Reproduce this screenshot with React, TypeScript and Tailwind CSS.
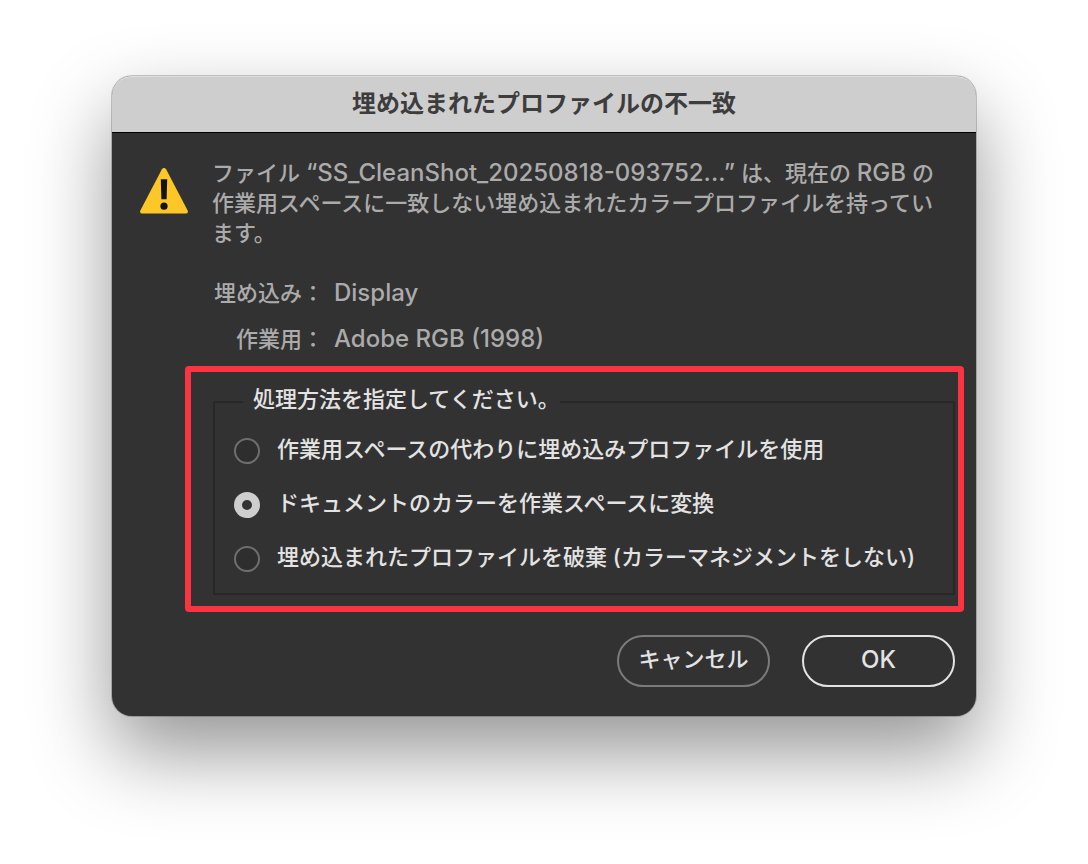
import { useState } from 'react';
import clsx from 'clsx';

type Method = {
  id: string;
  label: string;
};

const METHODS: Method[] = [
  { id: 'embedded', label: '作業用スペースの代わりに埋め込みプロファイルを使用' },
  { id: 'convert', label: 'ドキュメントのカラーを作業スペースに変換' },
  { id: 'discard', label: '埋め込まれたプロファイルを破棄 (カラーマネジメントをしない)' },
];

const PROFILES = [
  { label: '埋め込み：', value: 'Display' },
  { label: '作業用：', value: 'Adobe RGB (1998)' },
];

function WarningIcon() {
  return (
    <svg viewBox="0 0 48 46" className="mt-[10px] h-[46px] w-12 shrink-0" aria-hidden="true">
      <path
        d="M21.9 1.2 Q24 -1.4 26.1 1.2 L47.5 42.3 Q48.9 45.5 45.6 45.6 H2.4 Q-0.9 45.5 0.5 42.3 Z"
        fill="#ffc627"
      />
      <path d="M20.8 11.2 H27.2 L26.6 31.2 H21.4 Z" fill="#141414" />
      <circle cx="24" cy="38.2" r="3.6" fill="#141414" />
    </svg>
  );
}

type ButtonProps = {
  label: string;
  primary?: boolean;
};

function DialogButton({ label, primary }: ButtonProps) {
  return (
    <button
      type="button"
      className={clsx(
        'h-[52px] w-[153px] rounded-full border-2 font-medium text-[#e3e3e3]',
        primary ? 'border-[#e3e3e3] pb-[2px] text-2xl' : 'border-[#7b7b7b] pb-1',
      )}
    >
      {label}
    </button>
  );
}

export default function App() {
  const [method, setMethod] = useState('convert');

  return (
    <main className="min-h-screen bg-white px-28 pt-19 pb-37 font-[Inter,'Noto_Sans_CJK_JP',sans-serif] text-[22px] leading-[30px] font-medium text-[#ababab]">
      <div
        role="dialog"
        aria-labelledby="dialog-title"
        className="rounded-[20px] bg-[#323232] shadow-[0_0_0_1px_rgba(0,0,0,0.2),0_36px_80px_rgba(0,0,0,0.42)]"
      >
        <header className="rounded-t-[20px] border-b border-black bg-[#cecece] py-[13px] inset-shadow-[0_1px_0_#dedede]">
          <h1 id="dialog-title" className="text-center text-2xl leading-[30px] font-bold text-[#3d3d3d]">
            埋め込まれたプロファイルの不一致
          </h1>
        </header>

        <div className="flex gap-6 pt-[25px] pr-5 pl-7">
          <WarningIcon />
          <div className="grow">
            <p>
              ファイル <span className="text-2xl leading-[30px]">“SS_CleanShot_20250818-093752...”</span> は、現在の{' '}
              <span className="text-2xl leading-[30px]">RGB</span> の
              <br />
              作業用スペースに一致しない埋め込まれたカラープロファイルを持ってい
              <br />
              ます。
            </p>
            <dl className="mt-[30px] flex flex-col gap-4">
              {PROFILES.map((profile) => (
                <div key={profile.label} className="flex gap-[10px]">
                  <dt className="w-28 text-right">{profile.label}</dt>
                  <dd className="text-2xl leading-[30px]">{profile.value}</dd>
                </div>
              ))}
            </dl>
          </div>
        </div>

        <div className="mt-3 mr-3 ml-[73px] rounded-[4px] border-6 border-[#fc3442] pt-3 pr-[3px] pb-[11px] pl-[22px] text-[#e3e3e3]">
          <fieldset className="rounded-[2px] border-2 border-[#272727] pr-4 pb-[17px] pl-[19px]">
            <legend className="ml-[9px] pb-[6px] pl-[10px]">処理方法を指定してください。</legend>
            <div className="flex flex-col gap-5 pt-[14px]">
              {METHODS.map(({ id, label }) => (
                <div key={id} className="flex items-center gap-[17px]">
                  <input
                    type="radio"
                    id={id}
                    name="method"
                    checked={method === id}
                    onChange={() => setMethod(id)}
                    className="size-[26px] shrink-0 appearance-none rounded-full border-2 border-[#6e6e6e] bg-[#2e2e2e] checked:border-8 checked:border-[#cecece] checked:bg-[#323232]"
                  />
                  <label htmlFor={id} className="pb-1">
                    {label}
                  </label>
                </div>
              ))}
            </div>
          </fieldset>
        </div>

        <footer className="flex justify-end gap-8 pt-[23px] pr-[21px] pb-[29px]">
          <DialogButton label="キャンセル" />
          <DialogButton label="OK" primary />
        </footer>
      </div>
    </main>
  );
}
